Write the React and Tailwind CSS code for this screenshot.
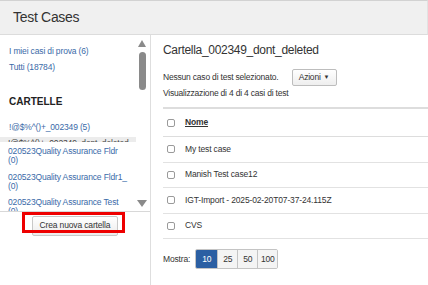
import React from 'react';

const folders = [
    { name: '020523Quality Assurance Fldr', count: 0 },
    { name: '020523Quality Assurance Fldr1_', count: 0 },
    { name: '020523Quality Assurance Test', count: 0 },
];

const rows = ['My test case', 'Manish Test case12', 'IGT-Import - 2025-02-20T07-37-24.115Z', 'CVS'];

const Checkbox = () => (
    <span className="block w-[8px] h-[8px] rounded-[2px] border border-[#9a9a9a] bg-white shrink-0" />
);

const App = () => {
    return (
        <div
            className="w-[428px] h-[285px] overflow-hidden bg-white text-[#333]"
            style={{ fontFamily: '"Liberation Sans", Arial, sans-serif' }}
        >
            {/* header */}
            <div className="h-[35px] flex items-center pl-[13px] bg-[#f0f0f0] border-t border-t-[#d2d2d2] border-b border-b-[#dcdcdc] border-r border-r-[#e2e2e2]">
                <h1 className="text-[14px] tracking-[-0.3px] text-[#333]">Test Cases</h1>
            </div>

            <div className="flex h-[250px]">
                {/* sidebar */}
                <aside className="w-[151px] shrink-0 border-r border-[#dedede] flex flex-col">
                    <div className="h-[177px] flex border-b border-[#d8d8d8] overflow-hidden">
                        <div className="flex-1 overflow-hidden text-[8.5px] leading-[9px] tracking-[-0.15px] text-[#3a6aa8]">
                            <div className="pl-[9px] pt-[12px]">
                                <div>I miei casi di prova (6)</div>
                                <div className="mt-[7px]">Tutti (18784)</div>
                                <div className="mt-[24px] text-[10px] leading-[12px] font-bold text-[#222] tracking-normal">
                                    CARTELLE
                                </div>
                                <div className="mt-[15px]">!@$%^()+_002349 (5)</div>
                            </div>
                            <div className="mt-[5px] h-[5px] overflow-hidden bg-[#ececec] pl-[8px] text-[#444]">
                                <div className="leading-[9px] pt-[2px] whitespace-nowrap">!@$%^()+_002349_dont_deleted</div>
                            </div>
                            <div className="pl-[8px]">
                                {folders.map((f, i) => (
                                    <div key={f.name} className={i === 0 ? 'mt-[5px]' : 'mt-[7.5px]'}>
                                        <span className="block whitespace-nowrap">{f.name}</span>
                                        <span className="block">({f.count})</span>
                                    </div>
                                ))}
                            </div>
                        </div>
                        {/* scrollbar */}
                        <div className="w-[14px] shrink-0 flex flex-col items-center pt-[5px] pb-[4px] pr-[2px]">
                            <span className="block w-0 h-0 border-x-[4px] border-x-transparent border-b-[7px] border-b-[#8a8a8a]" />
                            <span className="block mt-[5px] w-[7px] h-[38px] rounded-full bg-[#8a8a8a]" />
                            <span className="flex-1" />
                            <span className="block w-0 h-0 border-x-[5px] border-x-transparent border-t-[7px] border-t-[#8a8a8a]" />
                        </div>
                    </div>

                    <div className="pt-[4px] pl-[32px]">
                        <div className="relative w-[86px] h-[20px]">
                            <button className="block w-[86px] h-[20px] pb-[2px] border border-[#c8c8c8] rounded-[2px] bg-gradient-to-b from-white to-[#ececec] text-[8.5px] leading-[10px] tracking-[-0.15px] text-[#333]">
                                Crea nuova cartella
                            </button>
                            <span className="absolute left-[-10px] top-[-4px] w-[103px] h-[21px] border-[3px] border-[#ee0000] pointer-events-none" />
                        </div>
                    </div>
                </aside>

                {/* main */}
                <main className="flex-1 pl-[12px] pt-[8px]">
                    <h2 className="text-[12px] leading-[14px] tracking-[-0.3px] text-[#333]">
                        Cartella_002349_dont_deleted
                    </h2>
                    <div className="mt-[12px] flex items-center text-[8.5px] tracking-[-0.2px]">
                        <span>Nessun caso di test selezionato.</span>
                        <button className="ml-[13px] h-[17px] w-[45px] flex items-center justify-center gap-[3px] border border-[#bdbdbd] rounded-[2px] bg-gradient-to-b from-white to-[#eeeeee] text-[#333]">
                            Azioni
                            <span className="text-[6px]">▼</span>
                        </button>
                    </div>
                    <div className="mt-[3px] text-[8.5px] leading-[9px] tracking-[-0.2px]">
                        Visualizzazione di 4 di 4 casi di test
                    </div>

                    <div className="mt-[9px] border-t-2 border-[#dddddd]">
                        <div className="h-[28px] flex items-center pl-[4px] gap-[10px] border-b border-[#dddddd]">
                            <Checkbox />
                            <span className="text-[8.5px] font-bold underline text-[#333] tracking-[-0.15px]">Nome</span>
                        </div>
                        {rows.map(r => (
                            <div key={r} className="h-[25.5px] flex items-center pl-[4px] gap-[10px] border-b border-[#e2e2e2]">
                                <Checkbox />
                                <span className="text-[8.5px] text-[#333] tracking-[-0.15px] whitespace-nowrap">{r}</span>
                            </div>
                        ))}
                    </div>

                    <div className="mt-[10px] flex items-center text-[8.5px] tracking-[-0.15px]">
                        <span>Mostra:</span>
                        <div className="ml-[5px] flex h-[20px] rounded-[2px] overflow-hidden border border-[#c4c4c4]">
                            <span className="w-[21px] flex items-center justify-center bg-[#2b5fa3] text-white">10</span>
                            <span className="w-[20px] flex items-center justify-center bg-[#f4f4f4] border-l border-[#c4c4c4]">25</span>
                            <span className="w-[20px] flex items-center justify-center bg-[#f4f4f4] border-l border-[#c4c4c4]">50</span>
                            <span className="w-[20px] flex items-center justify-center bg-[#f4f4f4] border-l border-[#c4c4c4]">100</span>
                        </div>
                    </div>
                </main>
            </div>
        </div>
    );
};

export default App;
